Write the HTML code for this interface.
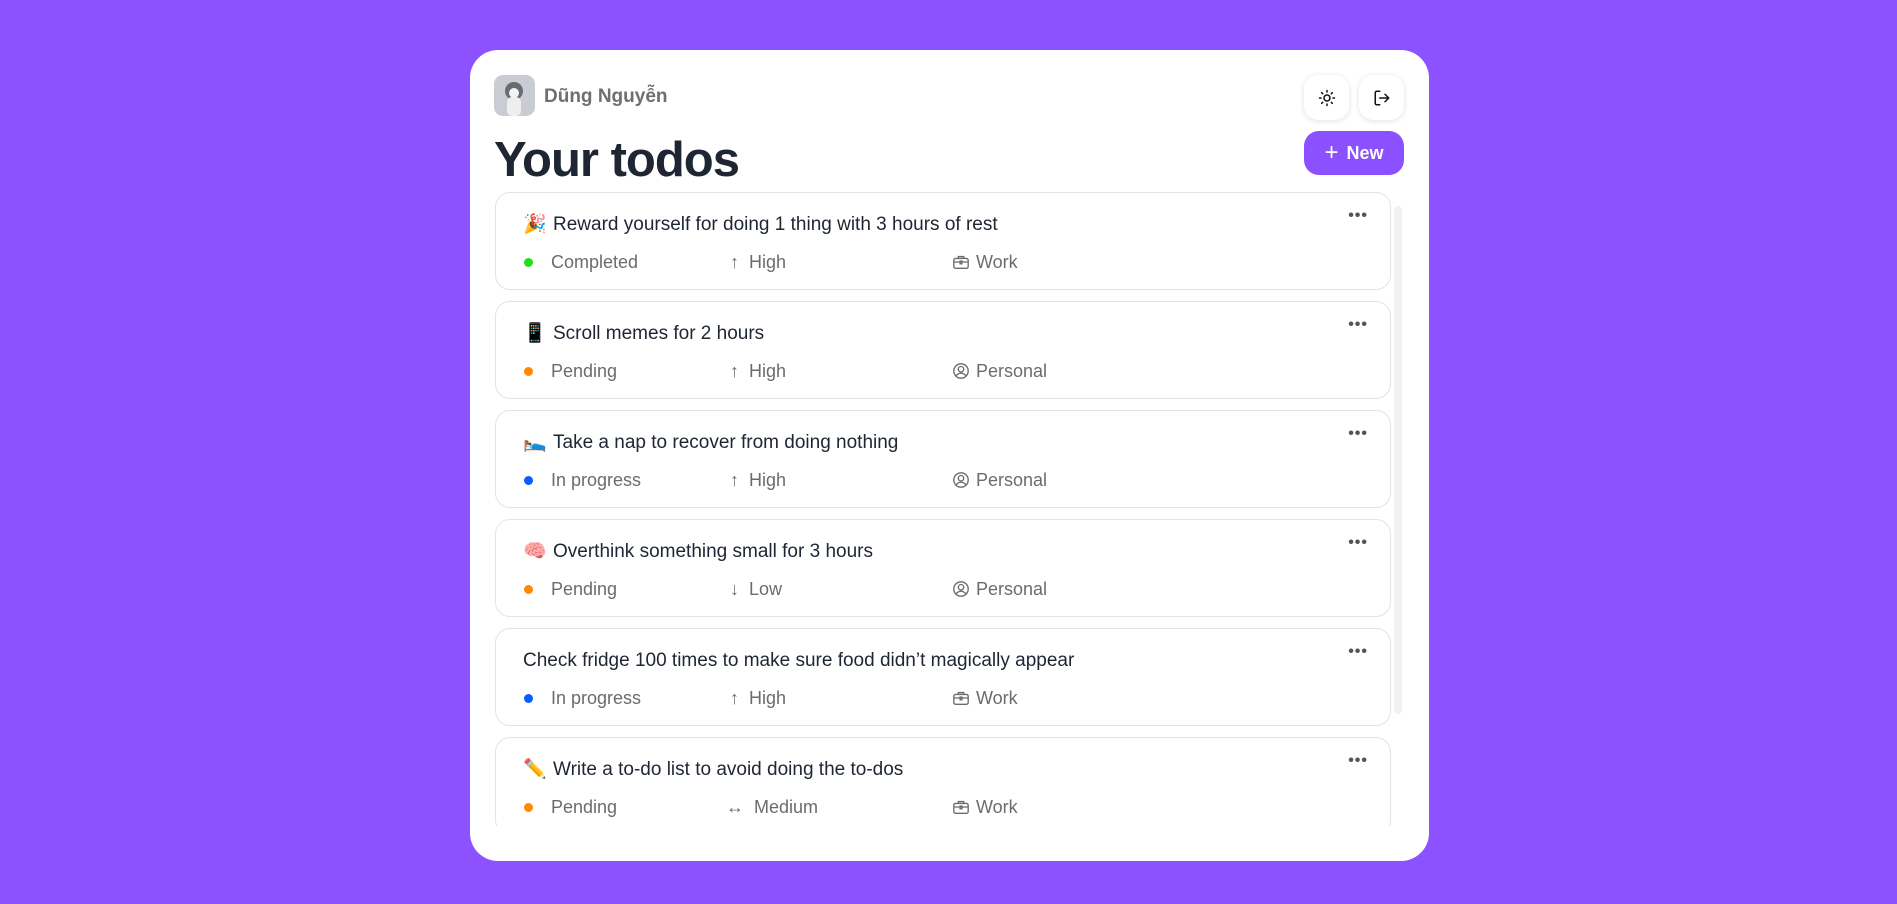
<!DOCTYPE html>
<html><head><meta charset="utf-8"><style>
*{box-sizing:border-box;margin:0;padding:0}
body{width:1897px;height:904px;background:#8c52ff;font-family:"Liberation Sans","Noto Sans CJK SC",sans-serif;position:relative;overflow:hidden}
.card{position:absolute;left:470px;top:50px;width:959px;height:811px;background:#fff;border-radius:28px}
.abs{position:absolute}
.avatar{left:24px;top:25px;width:41px;height:41px;border-radius:9px;background:#c9ccd3;overflow:hidden}
.name{left:74px;top:36px;font-size:19px;font-weight:bold;color:#6e6e73}
.ib{width:45px;height:45px;border-radius:14px;background:#fff;box-shadow:0 1px 6px rgba(0,0,0,.12);top:25px;display:flex;align-items:center;justify-content:center}
h1{position:absolute;left:24px;top:82px;font-size:49px;line-height:56px;font-weight:bold;color:#1e2533;letter-spacing:-1px}
.new{left:834px;top:81px;width:100px;height:44px;border-radius:15px;background:#8b50ff;color:#fff;font-weight:bold;font-size:18px;display:flex;align-items:center;justify-content:center;gap:8px}
.list{position:absolute;left:25px;top:142px;width:896px;height:634px;overflow:hidden}
.item{position:absolute;left:0;width:896px;height:98px;border:1.5px solid #e3e3e6;border-radius:15px}
.t{position:absolute;left:27px;top:20px;font-size:19px;line-height:24px;color:#1e2533;white-space:nowrap}
.t .e{display:inline-block;width:30px}
.m{position:absolute;top:58px;font-size:18px;line-height:22px;color:#6b6b70;white-space:nowrap;display:flex;align-items:center;gap:6px}
.dot{position:absolute;left:28px;top:65px;width:9px;height:9px;border-radius:50%}
.more{position:absolute;right:22px;top:14px;font-size:16px;color:#555;letter-spacing:1px;font-weight:bold}
.sb{position:absolute;left:924px;top:156px;width:8px;height:508px;background:#f1f1f1;border-radius:4px}
</style></head><body>
<svg width="0" height="0" style="position:absolute"><defs>
<symbol id="work" viewBox="0 0 20 20"><g fill="none" stroke="#6b6b70" stroke-width="1.5"><rect x="2" y="6" width="16" height="11" rx="2"/><path d="M7 6V4h6v2M2 10h16"/><rect x="9" y="9" width="2" height="3"/></g></symbol>
<symbol id="pers" viewBox="0 0 20 20"><g fill="none" stroke="#6b6b70" stroke-width="1.5"><circle cx="10" cy="10" r="8"/><circle cx="10" cy="8" r="3"/><path d="M4.5 15.5c1.5-2 3.5-3 5.5-3s4 1 5.5 3"/></g></symbol>
</defs></svg>
<div class="card">
<div class="abs avatar"><svg width="41" height="41" viewBox="0 0 41 41"><circle cx="20" cy="16" r="9" fill="#6a6a70"/><rect x="13" y="22" width="14" height="19" rx="5" fill="#eee"/><circle cx="20" cy="18" r="5" fill="#f3f3f3"/></svg></div>
<div class="abs name">Dũng Nguyễn</div>
<div class="abs ib" style="left:834px"><svg width="18" height="18" viewBox="0 0 24 24" fill="none" stroke="#111" stroke-width="2" stroke-linecap="round"><circle cx="12" cy="12" r="4"/><path d="M12 2v2M12 20v2M4.9 4.9l1.4 1.4M17.7 17.7l1.4 1.4M2 12h2M20 12h2M4.9 19.1l1.4-1.4M17.7 6.3l1.4-1.4"/></svg></div>
<div class="abs ib" style="left:889px"><svg width="18" height="18" viewBox="0 0 24 24" fill="none" stroke="#111" stroke-width="2" stroke-linecap="round" stroke-linejoin="round"><path d="M9 21H5a2 2 0 0 1-2-2V5a2 2 0 0 1 2-2h4M16 17l5-5-5-5M21 12H9"/></svg></div>
<h1>Your todos</h1>
<div class="abs new"><span style="font-size:24px;font-weight:normal">+</span>New</div>
<div class="list">
<div class="item" style="top:0"><div class="t"><span class="e">🎉</span>Reward yourself for doing 1 thing with 3 hours of rest</div><div class="more">•••</div><div class="dot" style="background:#1de01d"></div><div class="m" style="left:55px">Completed</div><div class="m" style="left:234px">↑&nbsp;&nbsp;High</div><div class="m" style="left:456px"><svg width="18" height="18"><use href="#work"/></svg>Work</div></div>
<div class="item" style="top:109px"><div class="t"><span class="e">📱</span>Scroll memes for 2 hours</div><div class="more">•••</div><div class="dot" style="background:#ff8a00"></div><div class="m" style="left:55px">Pending</div><div class="m" style="left:234px">↑&nbsp;&nbsp;High</div><div class="m" style="left:456px"><svg width="18" height="18"><use href="#pers"/></svg>Personal</div></div>
<div class="item" style="top:218px"><div class="t"><span class="e">🛌</span>Take a nap to recover from doing nothing</div><div class="more">•••</div><div class="dot" style="background:#0a5cff"></div><div class="m" style="left:55px">In progress</div><div class="m" style="left:234px">↑&nbsp;&nbsp;High</div><div class="m" style="left:456px"><svg width="18" height="18"><use href="#pers"/></svg>Personal</div></div>
<div class="item" style="top:327px"><div class="t"><span class="e">🧠</span>Overthink something small for 3 hours</div><div class="more">•••</div><div class="dot" style="background:#ff8a00"></div><div class="m" style="left:55px">Pending</div><div class="m" style="left:234px">↓&nbsp;&nbsp;Low</div><div class="m" style="left:456px"><svg width="18" height="18"><use href="#pers"/></svg>Personal</div></div>
<div class="item" style="top:436px"><div class="t">Check fridge 100 times to make sure food didn’t magically appear</div><div class="more">•••</div><div class="dot" style="background:#0a5cff"></div><div class="m" style="left:55px">In progress</div><div class="m" style="left:234px">↑&nbsp;&nbsp;High</div><div class="m" style="left:456px"><svg width="18" height="18"><use href="#work"/></svg>Work</div></div>
<div class="item" style="top:545px"><div class="t"><span class="e">✏️</span>Write a to-do list to avoid doing the to-dos</div><div class="more">•••</div><div class="dot" style="background:#ff8a00"></div><div class="m" style="left:55px">Pending</div><div class="m" style="left:230px">↔&nbsp;&nbsp;Medium</div><div class="m" style="left:456px"><svg width="18" height="18"><use href="#work"/></svg>Work</div></div>
</div>
<div class="sb"></div>
</div>
</body></html>
